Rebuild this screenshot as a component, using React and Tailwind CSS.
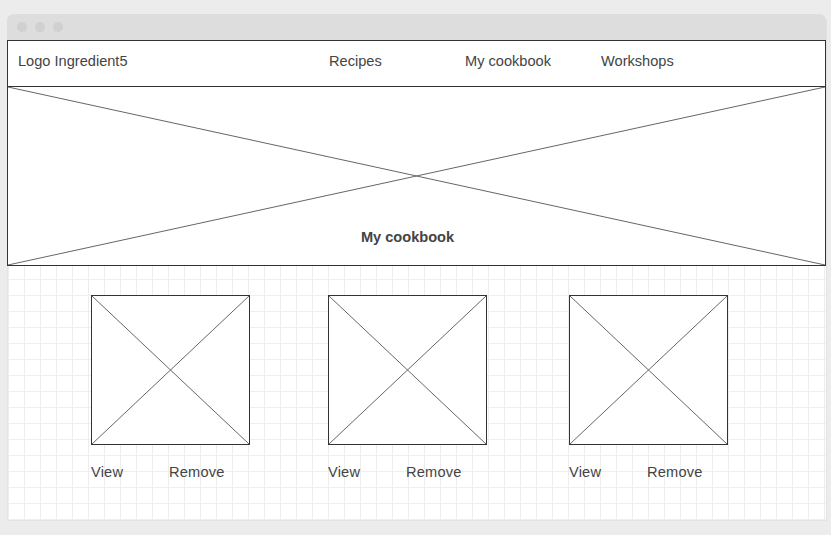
import React from "react";

function XBox({ className }) {
  return (
    <div className={"relative border border-[#333] bg-white " + className}>
      <svg className="absolute inset-0 h-full w-full" preserveAspectRatio="none" viewBox="0 0 100 100">
        <line x1="0" y1="0" x2="100" y2="100" stroke="#666" strokeWidth="1" vectorEffect="non-scaling-stroke" />
        <line x1="100" y1="0" x2="0" y2="100" stroke="#666" strokeWidth="1" vectorEffect="non-scaling-stroke" />
      </svg>
    </div>
  );
}

function Card({ ml }) {
  return (
    <div className={"flex flex-col " + ml}>
      <XBox className="h-[150px] w-[159px]" />
      <div className="mt-[19px] flex text-[14.6px] leading-[17px] tracking-[0.2px] text-[#444]">
        <span className="w-[78px]">View</span>
        <span>Remove</span>
      </div>
    </div>
  );
}

export default function App() {
  return (
    <div
      className="h-[535px] w-[831px] bg-[#ececec] pl-[7px] pt-[14px]"
      style={{ fontFamily: '"Liberation Sans", Arial, sans-serif' }}
    >
      <div className="flex h-[506px] w-[819px] flex-col overflow-hidden rounded-t-[6px] bg-white shadow-[1px_1px_0_#e2e2e2]">
        <div className="flex h-[26px] shrink-0 items-center gap-[8px] bg-[#dddddd] pl-[10px]">
          <span className="h-[10px] w-[10px] rounded-full bg-[#d0d0d0]" />
          <span className="h-[10px] w-[10px] rounded-full bg-[#d0d0d0]" />
          <span className="h-[10px] w-[10px] rounded-full bg-[#d0d0d0]" />
        </div>
        <div className="flex h-[47px] shrink-0 items-center border border-[#333] pb-[4px] pl-[10px] text-[14.6px] text-[#444]">
          <span className="w-[311px]">Logo Ingredient5</span>
          <span className="w-[136px]">Recipes</span>
          <span className="w-[136px]">My cookbook</span>
          <span>Workshops</span>
        </div>
        <div className="relative flex h-[179px] shrink-0 items-end justify-center border-x border-b border-[#333] pb-[16px] pr-[18px]">
          <svg className="absolute inset-0 h-full w-full" preserveAspectRatio="none" viewBox="0 0 100 100">
            <line x1="0" y1="0" x2="100" y2="100" stroke="#666" strokeWidth="1" vectorEffect="non-scaling-stroke" />
            <line x1="100" y1="0" x2="0" y2="100" stroke="#666" strokeWidth="1" vectorEffect="non-scaling-stroke" />
          </svg>
          <span className="relative text-[14.6px] font-bold text-[#444]">My cookbook</span>
        </div>
        <div className="flex flex-1 items-start border-l border-[#e4e4e4] bg-white bg-[linear-gradient(to_right,#ededed_1px,transparent_1px),linear-gradient(to_bottom,#efefef_1px,transparent_1px)] pt-[29px] [background-position:0px_13px] [background-size:16px_16px]">
          <Card ml="ml-[83px]" />
          <Card ml="ml-[78px]" />
          <Card ml="ml-[82px]" />
        </div>
      </div>
    </div>
  );
}
